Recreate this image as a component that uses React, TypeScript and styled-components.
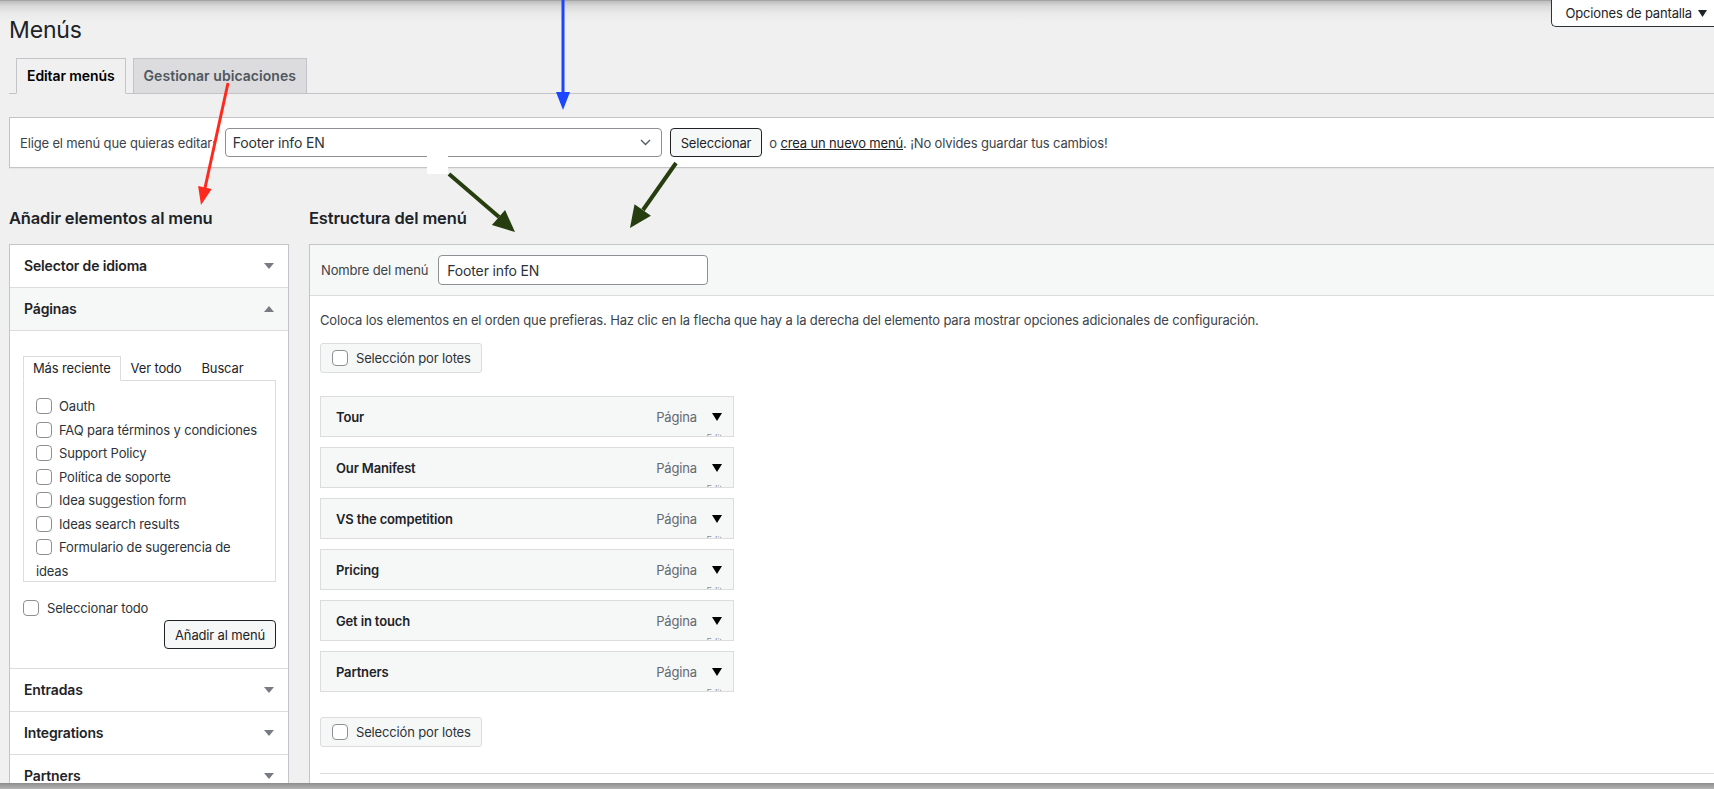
import React from 'react';
import styled, { createGlobalStyle } from 'styled-components';

const GlobalStyle = createGlobalStyle`
  html, body {
    margin: 0;
    padding: 0;
  }
  body {
    height: 789px;
    overflow: hidden;
    font-family: Inter, "Liberation Sans", Arial, sans-serif;
    font-size: 13px;
    letter-spacing: -0.15px;
    color: #3c434a;
    background: linear-gradient(
      to bottom,
      #8c8c8c 0,
      #bdbdbd 1px,
      #d9d9d9 6px,
      #e9e9ea 13px,
      #f0f0f1 22px
    );
  }
  * {
    box-sizing: border-box;
  }
  button {
    letter-spacing: inherit;
  }
`;

const Page = styled.div`
  position: relative;
  width: 100%;
  height: 789px;
  overflow: hidden;
  padding-left: 9px;
`;

const HeaderRow = styled.div`
  display: flex;
  justify-content: space-between;
  align-items: flex-start;
`;

const Title = styled.h1`
  margin: 0;
  padding-top: 15px;
  font-size: 23px;
  font-weight: 400;
  line-height: 30px;
  color: #1d2327;
`;

const ScreenOptions = styled.button`
  display: flex;
  align-items: center;
  gap: 6px;
  height: 27px;
  padding: 0 7px 0 13px;
  background: #fff;
  border: 1px solid #2c3338;
  border-top: none;
  border-right: none;
  border-radius: 0 0 0 5px;
  font-family: inherit;
  font-size: 13px;
  color: #1d2327;
`;

const TabBar = styled.div`
  display: flex;
  gap: 7px;
  margin-top: 13px;
  padding-left: 7px;
  border-bottom: 1px solid #c3c4c7;
`;

const Tab = styled.div<{ $active?: boolean }>`
  padding: 5px 10px;
  margin-bottom: -1px;
  border: 1px solid #c3c4c7;
  border-bottom: 1px solid ${(p) => (p.$active ? '#f0f0f1' : '#c3c4c7')};
  background: ${(p) => (p.$active ? '#f0f0f1' : '#dcdcde')};
  color: ${(p) => (p.$active ? '#000' : '#50575e')};
  font-size: 14px;
  font-weight: 600;
  line-height: 24px;
  letter-spacing: ${(p) => (p.$active ? '-0.1px' : '0.05px')};
`;

const ManagePanel = styled.div`
  display: flex;
  align-items: center;
  margin-top: 23px;
  margin-right: -10px;
  padding: 10px;
  background: #fff;
  border: 1px solid #c3c4c7;
  box-shadow: 0 1px 1px rgba(0, 0, 0, 0.04);
`;

const ManageLabel = styled.span`
  margin-right: 9px;
  color: #3c434a;
`;

const FakeSelect = styled.div`
  display: flex;
  align-items: center;
  justify-content: space-between;
  width: 437px;
  height: 29px;
  padding: 0 10px 0 7px;
  border: 1px solid #8c8f94;
  border-radius: 4px;
  font-size: 14px;
  color: #2c3338;

  svg {
    width: 11px;
    height: 7px;
  }
`;

const DarkButton = styled.button`
  height: 29px;
  padding: 0 10px;
  background: #f6f7f7;
  border: 1px solid #1d2327;
  border-radius: 4px;
  font-family: inherit;
  font-size: 13px;
  color: #1d2327;
`;

const SelectButton = styled(DarkButton)`
  margin-left: 8px;
`;

const Hint = styled.span`
  margin-left: 7px;
  color: #3c434a;

  u {
    color: #1d2327;
  }
`;

const Columns = styled.div`
  display: flex;
  gap: 20px;
  margin-top: 39px;
`;

const LeftCol = styled.div`
  width: 280px;
  flex-shrink: 0;
`;

const RightCol = styled.div`
  flex: 1;
  margin-right: -10px;
`;

const ColHeading = styled.h2`
  margin: 0 0 15px;
  font-size: 16.5px;
  font-weight: 600;
  line-height: 22px;
  color: #1d2327;
`;

const Accordion = styled.div`
  background: #fff;
  border: 1px solid #c3c4c7;
`;

const SectionTitle = styled.div<{ $open?: boolean }>`
  display: flex;
  align-items: center;
  justify-content: space-between;
  padding: 10px 14px 11px 14px;
  background: ${(p) => (p.$open ? '#f6f7f7' : '#fff')};
  border-bottom: 1px solid #dcdcde;
  font-size: 14px;
  font-weight: 600;
  line-height: 21px;
  color: #1d2327;

  svg {
    width: 10px;
    height: 6px;
  }
`;

const SectionBody = styled.div`
  padding: 25px 12px 19px 13px;
  border-bottom: 1px solid #dcdcde;
`;

const InnerTabs = styled.div`
  display: flex;
`;

const InnerTab = styled.div<{ $active?: boolean }>`
  position: relative;
  z-index: 1;
  padding: 0 9px;
  margin-bottom: -1px;
  line-height: 23px;
  color: #1d2327;
  border: 1px solid ${(p) => (p.$active ? '#dcdcde' : 'transparent')};
  border-bottom-color: ${(p) => (p.$active ? '#fff' : 'transparent')};
  background: ${(p) => (p.$active ? '#fff' : 'transparent')};
`;

const ListBox = styled.div`
  height: 202px;
  padding: 14px 12px 0 12px;
  border: 1px solid #dcdcde;
  overflow: hidden;
  line-height: 23.5px;
  color: #2c3338;
`;

const Check = styled.span`
  display: inline-block;
  width: 16px;
  height: 16px;
  margin-right: 7px;
  vertical-align: middle;
  position: relative;
  top: -1px;
  background: #fff;
  border: 1px solid #8c8f94;
  border-radius: 4px;
`;

const SelectAllRow = styled.div`
  margin-top: 14px;
  line-height: 24px;
  color: #2c3338;

  ${Check} {
    margin-right: 8px;
  }
`;

const ButtonRow = styled.div`
  display: flex;
  justify-content: flex-end;
`;

const MenuPanel = styled.div`
  height: 560px;
  background: #fff;
  border: 1px solid #c3c4c7;
  border-right: none;
`;

const PanelHeader = styled.div`
  display: flex;
  align-items: center;
  gap: 10px;
  padding: 10px 11px;
  background: #f6f7f7;
  border-bottom: 1px solid #dcdcde;
  color: #3c434a;
`;

const NameInput = styled.div`
  display: flex;
  align-items: center;
  width: 270px;
  height: 30px;
  padding: 0 8px;
  background: #fff;
  border: 1px solid #8c8f94;
  border-radius: 4px;
  font-size: 14px;
  color: #2c3338;
`;

const PanelBody = styled.div`
  padding: 15px 10px 0;
`;

const Description = styled.p`
  margin: 0;
  line-height: 18px;
  color: #3c434a;
`;

const BulkButton = styled.div<{ $top: number }>`
  display: inline-flex;
  align-items: center;
  gap: 8px;
  height: 30px;
  margin-top: ${(p) => p.$top}px;
  padding: 0 10px 0 11px;
  background: #f6f7f7;
  border: 1px solid #dcdcde;
  border-radius: 3px;
  color: #2c3338;

  ${Check} {
    margin: 0;
    top: 0;
  }
`;

const MenuList = styled.div`
  display: flex;
  flex-direction: column;
  gap: 10px;
  margin-top: 23px;
`;

const MenuItem = styled.div`
  position: relative;
  display: flex;
  align-items: center;
  width: 414px;
  height: 41px;
  padding: 0 11px 0 15px;
  overflow: hidden;
  background: #f6f7f7;
  border: 1px solid #dcdcde;
  font-weight: 600;
  color: #1d2327;
`;

const ItemType = styled.span`
  margin-left: auto;
  margin-right: 15px;
  font-weight: 400;
  color: #646970;
`;

const ItemToggle = styled.svg`
  width: 10px;
  height: 8px;
`;

const EditHint = styled.span`
  position: absolute;
  right: 11px;
  bottom: -7px;
  font-size: 9px;
  font-weight: 400;
  color: #8c8f94;
`;

const PanelFooter = styled.div`
  margin-top: 26px;
  height: 40px;
  border-top: 1px solid #dcdcde;
`;

const BottomBar = styled.div`
  position: absolute;
  left: 0;
  right: 0;
  bottom: 0;
  height: 6px;
  background: linear-gradient(to bottom, #8d8d8d, #b4b4b4);
`;

const Annotations = styled.svg`
  position: absolute;
  top: 0;
  left: 0;
  width: 1714px;
  height: 789px;
  pointer-events: none;
  z-index: 5;
`;

const pages = [
  'Oauth',
  'FAQ para términos y condiciones',
  'Support Policy',
  'Política de soporte',
  'Idea suggestion form',
  'Ideas search results',
  'Formulario de sugerencia de ideas',
];

const menuItems = ['Tour', 'Our Manifest', 'VS the competition', 'Pricing', 'Get in touch', 'Partners'];

const Caret = ({ up }: { up?: boolean }) => (
  <svg viewBox="0 0 10 6">
    <path d={up ? 'M0 6 L5 0 L10 6 Z' : 'M0 0 L10 0 L5 6 Z'} fill="#787c82" />
  </svg>
);

export default function App() {
  return (
    <>
      <GlobalStyle />
      <Page>
        <HeaderRow>
          <Title>Menús</Title>
          <ScreenOptions>
            Opciones de pantalla
            <svg width="9" height="7" viewBox="0 0 9 7">
              <path d="M0 0 L9 0 L4.5 7 Z" fill="#1d2327" />
            </svg>
          </ScreenOptions>
        </HeaderRow>

        <TabBar>
          <Tab $active>Editar menús</Tab>
          <Tab>Gestionar ubicaciones</Tab>
        </TabBar>

        <ManagePanel>
          <ManageLabel>Elige el menú que quieras editar:</ManageLabel>
          <FakeSelect>
            Footer info EN
            <svg viewBox="0 0 11 7">
              <path d="M1 1 L5.5 5.5 L10 1" fill="none" stroke="#50575e" strokeWidth="1.3" />
            </svg>
          </FakeSelect>
          <SelectButton>Seleccionar</SelectButton>
          <Hint>
            o <u>crea un nuevo menú</u>. ¡No olvides guardar tus cambios!
          </Hint>
        </ManagePanel>

        <Columns>
          <LeftCol>
            <ColHeading>Añadir elementos al menu</ColHeading>
            <Accordion>
              <SectionTitle>
                Selector de idioma
                <Caret />
              </SectionTitle>
              <SectionTitle $open>
                Páginas
                <Caret up />
              </SectionTitle>
              <SectionBody>
                <InnerTabs>
                  <InnerTab $active>Más reciente</InnerTab>
                  <InnerTab>Ver todo</InnerTab>
                  <InnerTab>Buscar</InnerTab>
                </InnerTabs>
                <ListBox>
                  {pages.map((p) => (
                    <div key={p}>
                      <Check />
                      {p}
                    </div>
                  ))}
                </ListBox>
                <SelectAllRow>
                  <Check />
                  Seleccionar todo
                </SelectAllRow>
                <ButtonRow>
                  <DarkButton>Añadir al menú</DarkButton>
                </ButtonRow>
              </SectionBody>
              <SectionTitle>
                Entradas
                <Caret />
              </SectionTitle>
              <SectionTitle>
                Integrations
                <Caret />
              </SectionTitle>
              <SectionTitle>
                Partners
                <Caret />
              </SectionTitle>
            </Accordion>
          </LeftCol>

          <RightCol>
            <ColHeading>Estructura del menú</ColHeading>
            <MenuPanel>
              <PanelHeader>
                Nombre del menú
                <NameInput>Footer info EN</NameInput>
              </PanelHeader>
              <PanelBody>
                <Description>
                  Coloca los elementos en el orden que prefieras. Haz clic en la flecha que hay a la derecha
                  del elemento para mostrar opciones adicionales de configuración.
                </Description>
                <BulkButton $top={14}>
                  <Check />
                  Selección por lotes
                </BulkButton>
                <MenuList>
                  {menuItems.map((m) => (
                    <MenuItem key={m}>
                      {m}
                      <ItemType>Página</ItemType>
                      <ItemToggle viewBox="0 0 10 8">
                        <path d="M0 0 L10 0 L5 8 Z" fill="#000" />
                      </ItemToggle>
                      <EditHint>Edit</EditHint>
                    </MenuItem>
                  ))}
                </MenuList>
                <BulkButton $top={25}>
                  <Check />
                  Selección por lotes
                </BulkButton>
                <PanelFooter />
              </PanelBody>
            </MenuPanel>
          </RightCol>
        </Columns>

        <Annotations viewBox="0 0 1714 789">
          {/* blue */}
          <line x1="563" y1="0" x2="563" y2="94" stroke="#1b45ff" strokeWidth="3" />
          <path d="M556 92 L570 92 L563 110 Z" fill="#1b45ff" />
          {/* red */}
          <line x1="228" y1="83" x2="205" y2="188" stroke="#ff2a1f" strokeWidth="3" />
          <path d="M211.7 188.9 L198.1 185.9 L201 205 Z" fill="#ff2a1f" />
          {/* white patch */}
          <rect x="427" y="155" width="21" height="19" fill="#fff" />
          {/* green */}
          <line x1="449" y1="174" x2="499" y2="217" stroke="#263d0f" strokeWidth="4" />
          <path d="M491.9 225 L505.1 210 L515 232 Z" fill="#263d0f" />
          <line x1="676" y1="163" x2="643" y2="210" stroke="#263d0f" strokeWidth="4" />
          <path d="M650.9 215.8 L634.5 204.2 L630 228 Z" fill="#263d0f" />
        </Annotations>

        <BottomBar />
      </Page>
    </>
  );
}
